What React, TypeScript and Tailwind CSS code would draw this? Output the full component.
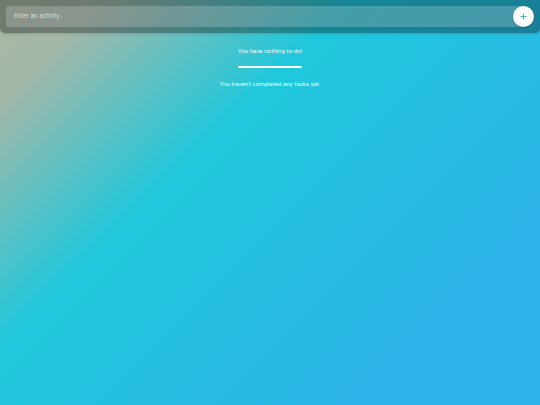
import React from "react";

export default function App() {
  return (
    <div
      className="w-[540px] h-[405px] overflow-hidden bg-[linear-gradient(135deg,#aab7a4_0%,#a2b8a9_11%,#1fc8dc_37%,#27bde2_60%,#2eb2ea_85%)]"
      style={{ fontFamily: "Roboto, 'Liberation Sans', sans-serif" }}
    >
      <header className="h-[33px] bg-[rgba(0,0,0,0.33)] rounded-b-[5px] px-[6px] pt-[6px] shadow-[0_1px_3px_rgba(0,0,0,0.15)]">
        <div className="relative h-[21px]">
          <div className="h-[21px] mr-[10px] rounded-[3px] bg-[rgba(255,255,255,0.2)] flex items-center pl-[8px]">
            <span className="text-[6.4px] text-[rgba(255,255,255,0.65)]">Enter an activity..</span>
          </div>
          <button className="absolute right-0 top-0 w-[21px] h-[21px] rounded-full bg-white flex items-center justify-center shadow-[0_1px_2px_rgba(0,0,0,0.2)]">
            <svg width="7" height="7" viewBox="0 0 7 7">
              <path d="M3.5 0.5V6.5M0.5 3.5H6.5" stroke="#35b096" strokeWidth="0.9" />
            </svg>
          </button>
        </div>
      </header>
      <main className="flex flex-col items-center text-[rgba(255,255,255,0.92)]">
        <p className="mt-[14px] text-[6.2px] leading-[8px]">You have nothing to-do!</p>
        <div className="mt-[11px] w-[64px] h-[1.5px] bg-white" />
        <p className="mt-[12px] text-[6.2px] leading-[8px]">You haven't completed any tasks yet.</p>
      </main>
    </div>
  );
}
